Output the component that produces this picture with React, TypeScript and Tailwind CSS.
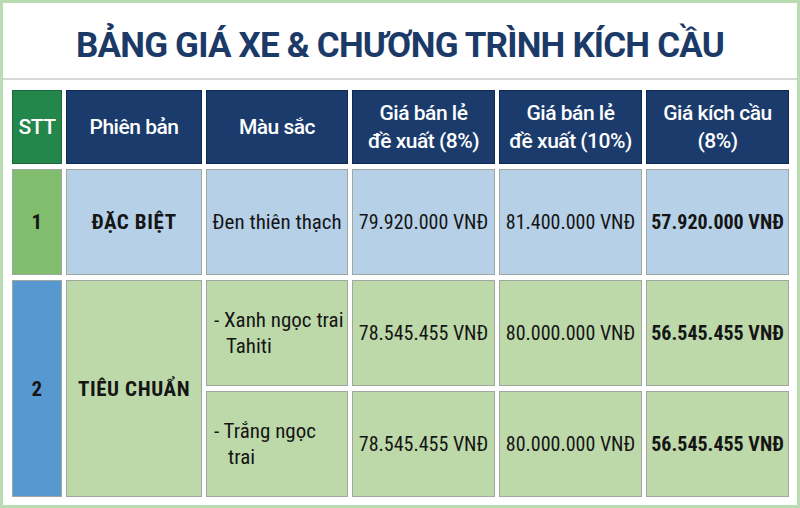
import React from 'react';

const HEAD = 'flex items-center justify-center text-center border border-[#0f2a50] bg-[#1a3b6b] text-white font-medium text-[21px] leading-[28px] [font-stretch:92%] tracking-[-0.5px]';
const BODY = 'flex items-center justify-center text-center border border-[#9ea7a0] text-[20px] leading-[26px] text-[#151515]';
const BIG = 'font-bold text-[21px] tracking-[0.6px]';

const rows = [
  { color: ['Đen thiên thạch'], p8: '79.920.000 VNĐ', p10: '81.400.000 VNĐ', promo: '57.920.000 VNĐ', bg: 'bg-[#b5d0e7]' },
  { color: ['- Xanh ngọc trai', 'Tahiti'], p8: '78.545.455 VNĐ', p10: '80.000.000 VNĐ', promo: '56.545.455 VNĐ', bg: 'bg-[#bdd9aa]' },
  { color: ['- Trắng ngọc', 'trai'], p8: '78.545.455 VNĐ', p10: '80.000.000 VNĐ', promo: '56.545.455 VNĐ', bg: 'bg-[#bdd9aa]' },
];

export default function App() {
  return (
    <div
      className="w-[800px] h-[508px] flex flex-col bg-white border-[3px] border-[#b9dcb2] [font-stretch:85%]"
      style={{ fontFamily: 'Roboto, "Noto Sans", sans-serif' }}
    >
      <div className="h-[77px] shrink-0 flex items-center justify-center pt-[12px] border-b-2 border-[#d6d8d6]">
        <h1 className="text-[35px] font-bold text-[#1c3a68] [font-stretch:92%] tracking-[-0.8px]">
          BẢNG GIÁ XE &amp; CHƯƠNG TRÌNH KÍCH CẦU
        </h1>
      </div>

      <div className="grid grid-cols-[50px_136px_142px_143px_143px_143px] grid-rows-[74px_106px_106px_106px] gap-x-[4px] gap-y-[5px] pl-[9px] pt-[10px]">
        <div className={`${HEAD} bg-[#23864a] border-[#1b6a3a]`}>STT</div>
        <div className={HEAD}>Phiên bản</div>
        <div className={HEAD}>Màu sắc</div>
        <div className={HEAD}>Giá bán lẻ<br />đề xuất (8%)</div>
        <div className={HEAD}>Giá bán lẻ<br />đề xuất (10%)</div>
        <div className={HEAD}>Giá kích cầu<br />(8%)</div>

        {/* row 1 */}
        <div className={`${BODY} bg-[#80bd6d] ${BIG}`}>1</div>
        <div className={`${BODY} ${rows[0].bg} ${BIG}`}>ĐẶC BIỆT</div>
        <div className={`${BODY} ${rows[0].bg} text-[21px] whitespace-nowrap`}>{rows[0].color[0]}</div>
        <div className={`${BODY} ${rows[0].bg}`}>{rows[0].p8}</div>
        <div className={`${BODY} ${rows[0].bg}`}>{rows[0].p10}</div>
        <div className={`${BODY} ${rows[0].bg} font-bold`}>{rows[0].promo}</div>

        {/* row 2, two colours */}
        <div className={`${BODY} bg-[#5898d0] ${BIG} row-span-2 border-[#4a7fb0]`}>2</div>
        <div className={`${BODY} bg-[#bdd9aa] ${BIG} row-span-2`}>TIÊU CHUẨN</div>
        {rows.slice(1).map((r, i) => (
          <React.Fragment key={i}>
            <div className={`${BODY} ${r.bg} justify-start text-left pl-[7px] text-[21px] whitespace-nowrap`}>
              <div>
                <div>{r.color[0]}</div>
                <div className={i === 0 ? 'pl-[12px]' : 'pl-[14px]'}>{r.color[1]}</div>
              </div>
            </div>
            <div className={`${BODY} ${r.bg}`}>{r.p8}</div>
            <div className={`${BODY} ${r.bg}`}>{r.p10}</div>
            <div className={`${BODY} ${r.bg} font-bold`}>{r.promo}</div>
          </React.Fragment>
        ))}
      </div>
    </div>
  );
}
